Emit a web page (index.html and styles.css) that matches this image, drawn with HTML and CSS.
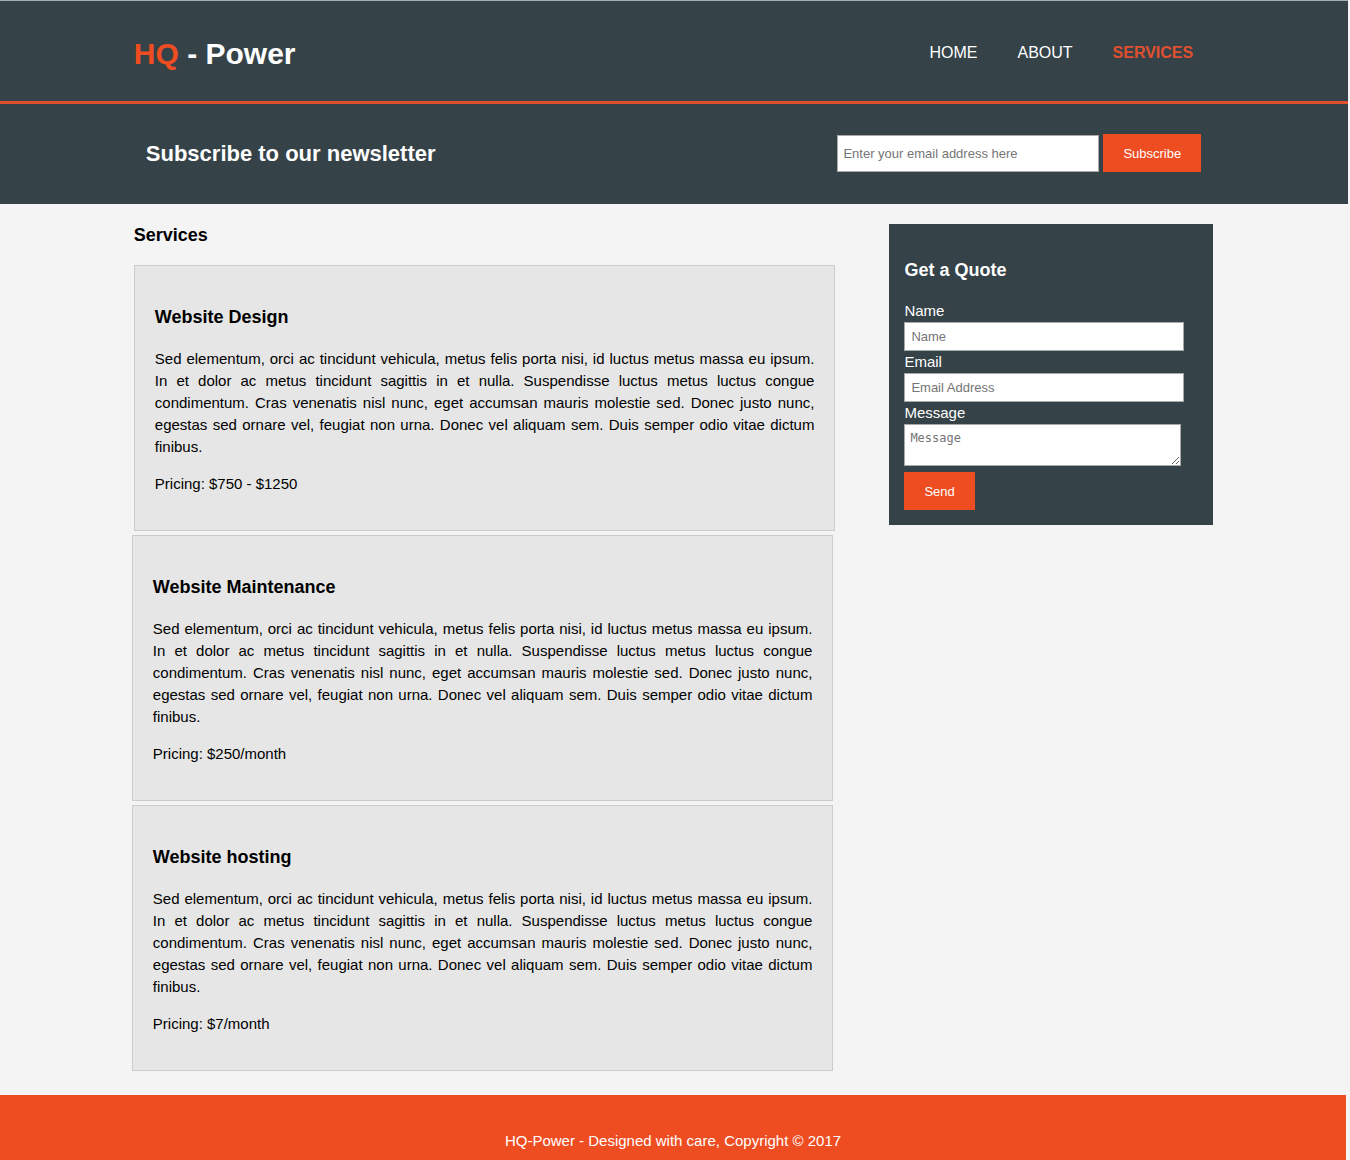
FILE: index.html
```html
<!DOCTYPE html>
<html lang="en">
<head>
<meta charset="utf-8">
<title>HQ - Power | Services</title>
<link rel="stylesheet" href="styles.css">
</head>
<body>
<header class="site-header">
  <div class="container header-row">
    <h1 class="brand"><span class="highlight">HQ</span> - Power</h1>
    <nav>
      <ul class="nav-list">
        <li><a href="#">HOME</a></li>
        <li><a href="#">ABOUT</a></li>
        <li><a class="current" href="#" aria-current="page">SERVICES</a></li>
      </ul>
    </nav>
  </div>
</header>

<section class="newsletter">
  <div class="container newsletter-row">
    <h2 class="newsletter-title">Subscribe to our newsletter</h2>
    <form class="newsletter-form">
      <input class="newsletter-input" type="email" aria-label="Email address" placeholder="Enter your email address here">
      <button class="button" type="submit">Subscribe</button>
    </form>
  </div>
</section>

<div class="container content">
  <main class="main-col">
    <h2 class="heading page-title">Services</h2>
    <ul class="services">
      <li class="service">
        <h3 class="heading">Website Design</h3>
        <p>Sed elementum, orci ac tincidunt vehicula, metus felis porta nisi, id luctus metus massa eu ipsum. In et dolor ac metus tincidunt sagittis in et nulla. Suspendisse luctus metus luctus congue condimentum. Cras venenatis nisl nunc, eget accumsan mauris molestie sed. Donec justo nunc, egestas sed ornare vel, feugiat non urna. Donec vel aliquam sem. Duis semper odio vitae dictum finibus.</p>
        <p>Pricing: $750 - $1250</p>
      </li>
      <li class="service">
        <h3 class="heading">Website Maintenance</h3>
        <p>Sed elementum, orci ac tincidunt vehicula, metus felis porta nisi, id luctus metus massa eu ipsum. In et dolor ac metus tincidunt sagittis in et nulla. Suspendisse luctus metus luctus congue condimentum. Cras venenatis nisl nunc, eget accumsan mauris molestie sed. Donec justo nunc, egestas sed ornare vel, feugiat non urna. Donec vel aliquam sem. Duis semper odio vitae dictum finibus.</p>
        <p>Pricing: $250/month</p>
      </li>
      <li class="service">
        <h3 class="heading">Website hosting</h3>
        <p>Sed elementum, orci ac tincidunt vehicula, metus felis porta nisi, id luctus metus massa eu ipsum. In et dolor ac metus tincidunt sagittis in et nulla. Suspendisse luctus metus luctus congue condimentum. Cras venenatis nisl nunc, eget accumsan mauris molestie sed. Donec justo nunc, egestas sed ornare vel, feugiat non urna. Donec vel aliquam sem. Duis semper odio vitae dictum finibus.</p>
        <p>Pricing: $7/month</p>
      </li>
    </ul>
  </main>

  <aside class="quote">
    <h3 class="heading">Get a Quote</h3>
    <form class="quote-form">
      <label for="name">Name</label>
      <input class="field" id="name" type="text" placeholder="Name">
      <label for="email">Email</label>
      <input class="field" id="email" type="email" placeholder="Email Address">
      <label for="message">Message</label>
      <textarea class="field-area" id="message" placeholder="Message"></textarea>
      <button class="button" type="submit">Send</button>
    </form>
  </aside>
</div>

<footer class="site-footer">
  <p>HQ-Power - Designed with care, Copyright &copy; 2017</p>
</footer>
</body>
</html>
```
FILE: styles.css
```css
* {
  box-sizing: border-box;
}

html {
  background: #f4f4f4;
}

body {
  margin: 0 2px 0 0;
  font: 15px/22px "Liberation Sans", Arial, Helvetica, sans-serif;
  color: #000;
}

h1, h2, h3, p, ul {
  margin: 0;
  padding: 0;
}

ul {
  list-style: none;
}

.container {
  margin: 0 10% 0 calc(10% - 1px);
}

.heading {
  font-size: 18px;
  line-height: 26px;
}

.button {
  height: 38px;
  padding: 0 20px;
  border: 0;
  background: #ee4d22;
  color: #fff;
  font: 13px "Liberation Sans", Arial, sans-serif;
}

input, textarea {
  margin: 0;
  border: 1px solid #a9a9a9;
  background: #fff;
  font: 13px "Liberation Sans", Arial, sans-serif;
}

::placeholder {
  color: #757575;
}

/* Header */
.site-header {
  border-top: 1px solid #a4b0b8;
  border-bottom: 3px solid #e0502f;
  background: #354248;
  color: #fff;
}

.header-row {
  display: flex;
  align-items: center;
  justify-content: space-between;
  min-height: 100px;
  padding: 4px 20px 0 0;
}

.brand {
  padding-top: 2px;
  font-size: 30px;
  line-height: 36px;
}

.highlight {
  color: #ee4d22;
}

.nav-list {
  display: flex;
  gap: 40px;
  font-size: 16px;
}

.nav-list a {
  color: #fff;
  text-decoration: none;
}

.nav-list .current {
  color: #e0502f;
  font-weight: bold;
}

/* Newsletter */
.newsletter {
  background: #354248;
  color: #fff;
}

.newsletter-row {
  display: flex;
  align-items: center;
  justify-content: space-between;
  min-height: 100px;
  padding: 0 12px 2px;
}

.newsletter-title {
  padding-top: 2px;
  font-size: 22px;
  line-height: 34px;
}

.newsletter-form {
  display: flex;
  align-items: flex-end;
  gap: 4px;
}

.newsletter-input {
  width: 262px;
  height: 37px;
  padding: 4px 5px;
}

/* Content */
.content {
  display: flex;
  align-items: flex-start;
  justify-content: space-between;
  padding: 18px 0 24px;
}

.main-col {
  width: 65%;
}

.page-title {
  margin-bottom: 17px;
}

.services {
  display: grid;
  gap: 4px;
}

.service {
  padding: 38px 20px 35px;
  border: 1px solid #ccc;
  background: #e6e6e6;
}

.service + .service {
  margin: 0 2px 0 -2px;
}

.service .heading {
  margin-bottom: 18px;
}

.service p {
  text-align: justify;
}

.service p + p {
  margin-top: 15px;
}

/* Quote form */
.quote {
  width: 30%;
  margin-top: 2px;
  padding: 33px 15px 15px;
  background: #354248;
  color: #fff;
}

.quote .heading {
  margin-bottom: 17px;
}

.quote-form {
  display: flex;
  flex-direction: column;
  align-items: flex-start;
}

.field {
  width: 95%;
  height: 29px;
  padding: 4px 6px;
}

.field-area {
  width: 94%;
  height: 42px;
  margin-bottom: 6px;
  padding: 6px 5px;
  font: 12px "DejaVu Sans Mono", monospace;
}

/* Footer */
.site-footer {
  margin-right: 2px;
  padding: 35px 0 8px;
  background: #ee4d22;
  color: #fff;
  text-align: center;
}
```
